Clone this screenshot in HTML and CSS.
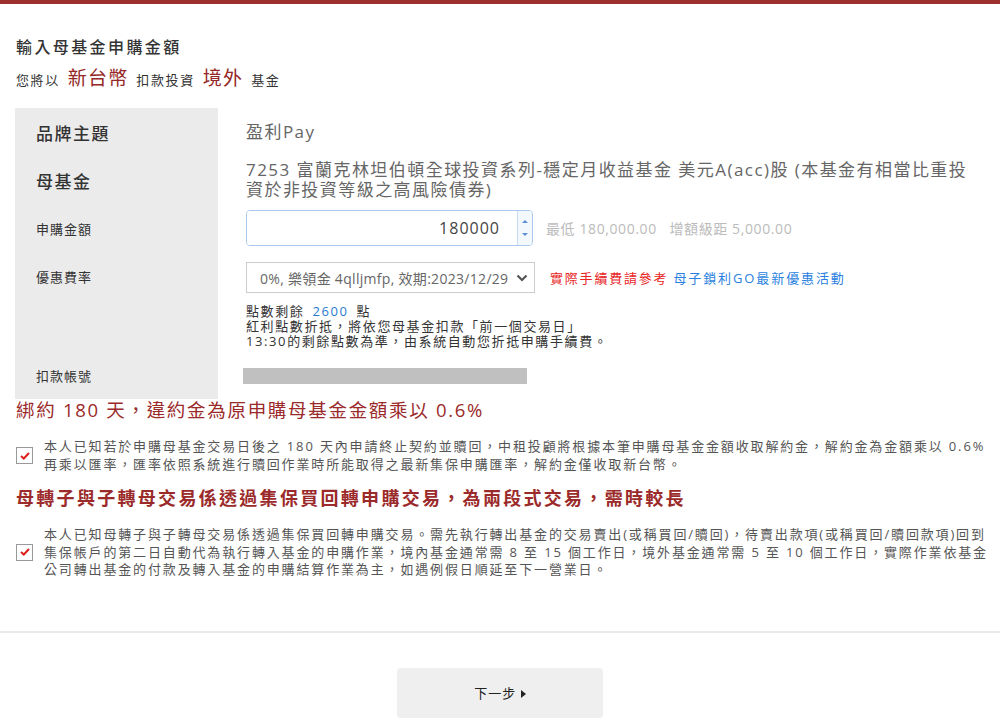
FILE: index.html
```html
<!DOCTYPE html>
<html>

<head>
    <meta charset="utf-8">
    <title>輸入母基金申購金額</title>
    <link rel="stylesheet" href="styles.css">
</head>

<body>
    <div class="main">
        <h1 class="title">輸入母基金申購金額</h1>
        <p class="subtitle">您將以 <span class="em">新台幣</span> 扣款投資 <span class="em">境外</span> 基金</p>

        <div class="form-table">
            <div class="row row-brand">
                <div class="label label-big">品牌主題</div>
                <div class="value value-big">盈利Pay</div>
            </div>
            <div class="row row-fund">
                <div class="label label-big">母基金</div>
                <div class="value value-big">7253 富蘭克林坦伯頓全球投資系列-穩定月收益基金 美元A(acc)股 (本基金有相當比重投資於非投資等級之高風險債券)</div>
            </div>
            <div class="row row-amount">
                <div class="label">申購金額</div>
                <div class="value value-inline">
                    <div class="amount-box">
                        <input class="amount-input" type="text" value="180000">
                        <div class="spinner">
                            <span class="spin-up"></span>
                            <span class="spin-down"></span>
                        </div>
                    </div>
                    <span class="hint">最低 180,000.00&nbsp;&nbsp; 增額級距 5,000.00</span>
                </div>
            </div>
            <div class="row row-fee">
                <div class="label label-top">優惠費率</div>
                <div class="value">
                    <div class="value-inline">
                        <div class="select-box">
                            <span>0%, 樂領金 4qlljmfp, 效期:2023/12/29</span>
                            <svg width="12" height="8" viewBox="0 0 12 8"><path d="M1.5 1.5 L6 6 L10.5 1.5" fill="none" stroke="#555" stroke-width="2.2"/></svg>
                        </div>
                        <span class="note-red">實際手續費請參考</span>
                        <a class="note-link" href="#">母子鎖利GO最新優惠活動</a>
                    </div>
                    <div class="points">
                        點數剩餘 <span class="points-num">2600</span> 點<br>
                        紅利點數折抵，將依您母基金扣款「前一個交易日」<br>
                        13:30的剩餘點數為準，由系統自動您折抵申購手續費。
                    </div>
                </div>
            </div>
            <div class="row row-account">
                <div class="label">扣款帳號</div>
                <div class="value">
                    <div class="account-bar"></div>
                </div>
            </div>
        </div>

        <h2 class="warn">綁約 180 天，違約金為原申購母基金金額乘以 0.6%</h2>
        <label class="agree">
            <span class="check"><svg width="10" height="8" viewBox="0 0 10 8"><path d="M1 4 L3.8 6.5 L9 1" fill="none" stroke="#e0201c" stroke-width="2"/></svg></span>
            <span class="agree-text">本人已知若於申購母基金交易日後之 180 天內申請終止契約並贖回，中租投顧將根據本筆申購母基金金額收取解約金，解約金為金額乘以 0.6% 再乘以匯率，匯率依照系統進行贖回作業時所能取得之最新集保申購匯率，解約金僅收取新台幣。</span>
        </label>

        <h2 class="warn warn-bold">母轉子與子轉母交易係透過集保買回轉申購交易，為兩段式交易，需時較長</h2>
        <label class="agree">
            <span class="check"><svg width="10" height="8" viewBox="0 0 10 8"><path d="M1 4 L3.8 6.5 L9 1" fill="none" stroke="#e0201c" stroke-width="2"/></svg></span>
            <span class="agree-text">本人已知母轉子與子轉母交易係透過集保買回轉申購交易。需先執行轉出基金的交易賣出(或稱買回/贖回)，待賣出款項(或稱買回/贖回款項)回到集保帳戶的第二日自動代為執行轉入基金的申購作業，境內基金通常需 8 至 15 個工作日，境外基金通常需 5 至 10 個工作日，實際作業依基金公司轉出基金的付款及轉入基金的申購結算作業為主，如遇例假日順延至下一營業日。</span>
        </label>
    </div>

    <hr class="divider">

    <div class="actions">
        <button class="next-btn">下一步 <svg width="5" height="8" viewBox="0 0 5 8"><path d="M0 0 L5 4 L0 8 Z" fill="#222"/></svg></button>
    </div>
</body>

</html>
```

FILE: styles.css
```css
body {
    margin: 0;
    font-family: "Open Sans", "Noto Sans CJK TC", sans-serif;
    color: #333;
    background-color: #fff;
    border-top: 4px solid #9d2f2c;
}

.main {
    padding: 0 15px;
}

.title {
    margin: 32px 0 0 1px;
    font-size: 16px;
    line-height: 22px;
    font-weight: 500;
    letter-spacing: 2.4px;
}

.subtitle {
    margin: 7px 0 0 1px;
    font-size: 13px;
    line-height: 26px;
    letter-spacing: 1.6px;
}

.subtitle .em {
    font-size: 19px;
    letter-spacing: 1.2px;
    color: #952726;
    margin: 0 3px;
}

.form-table {
    margin-top: 15px;
}

.row {
    display: flex;
}

.label {
    flex: 0 0 182px;
    padding-left: 21px;
    background-color: #ebebeb;
    font-size: 13px;
    letter-spacing: 1px;
    display: flex;
    align-items: center;
}

.label-big {
    font-size: 17px;
    font-weight: 500;
    letter-spacing: 1.5px;
}

.label-top {
    align-items: flex-start;
    padding-top: 10px;
    line-height: 31px;
}

.value {
    flex: 1;
    padding-left: 28px;
}

.value-big {
    font-size: 17px;
    line-height: 20px;
    color: #666;
    letter-spacing: 1.45px;
    padding-right: 11px;
}

.row-brand,
.row-fund,
.row-amount {
    height: 48px;
}

.row-brand .value,
.row-fund .value,
.row-amount .value {
    display: flex;
    align-items: center;
}

.value-inline {
    display: flex;
    align-items: center;
}

.amount-box {
    display: flex;
    width: 285px;
    height: 34px;
    border: 1px solid #a9c8ec;
    border-radius: 4px;
    overflow: hidden;
}

.amount-input {
    flex: 1;
    min-width: 0;
    border: none;
    outline: none;
    text-align: right;
    padding-right: 17px;
    font-family: inherit;
    font-size: 16px;
    letter-spacing: 1px;
    color: #444;
}

.spinner {
    width: 14px;
    border-left: 1px solid #c7dbf2;
    background-color: #f3f8fd;
    display: flex;
    flex-direction: column;
    align-items: center;
    justify-content: space-around;
    padding: 4px 0;
}

.spin-up {
    border-left: 3px solid transparent;
    border-right: 3px solid transparent;
    border-bottom: 3px solid #5b8fcf;
}

.spin-down {
    border-left: 3px solid transparent;
    border-right: 3px solid transparent;
    border-top: 3px solid #5b8fcf;
}

.hint {
    margin-left: 13px;
    font-size: 14px;
    letter-spacing: 0.6px;
    color: #bbb;
}

.row-fee .value {
    padding-top: 10px;
    padding-bottom: 6px;
}

.select-box {
    display: flex;
    align-items: center;
    justify-content: space-between;
    box-sizing: border-box;
    width: 289px;
    height: 31px;
    padding: 0 6px 0 13px;
    border: 1px solid #ccc;
    font-size: 14px;
    letter-spacing: 0.3px;
    color: #666;
}

.note-red {
    margin-left: 15px;
    font-size: 13px;
    letter-spacing: 1.8px;
    color: #e8261f;
}

.note-link {
    margin-left: 5px;
    font-size: 13px;
    letter-spacing: 1.9px;
    color: #2a7fe0;
    text-decoration: none;
}

.points {
    margin-top: 11px;
    font-size: 13px;
    line-height: 15px;
    letter-spacing: 1.6px;
    color: #333;
}

.points-num {
    color: #2a7ad0;
    margin: 0 3px;
}

.row-account {
    height: 44px;
}

.row-account .label,
.row-account .value {
    padding-bottom: 3px;
}

.row-account .value {
    display: flex;
    align-items: center;
}

.account-bar {
    width: 284px;
    height: 16px;
    margin-left: -3px;
    background-color: #c0c0c0;
}

.warn {
    margin: 0 0 0 1px;
    font-size: 18.5px;
    line-height: 22px;
    font-weight: 400;
    letter-spacing: 1.7px;
    color: #9b2a2a;
}

.warn-bold {
    margin-top: 14px;
    font-size: 18px;
    font-weight: 700;
    letter-spacing: 2.3px;
}

.agree {
    display: flex;
    align-items: center;
    margin-top: 17px;
    margin-right: -8px;
}

.check {
    flex: 0 0 auto;
    display: flex;
    align-items: center;
    justify-content: center;
    width: 15px;
    height: 15px;
    margin: 0 11px 0 1px;
    border: 1px solid #999;
    background-color: #fff;
}

.agree-text {
    font-size: 13px;
    line-height: 17.5px;
    letter-spacing: 1.85px;
    color: #555;
}

.divider {
    margin: 52px 0 0;
    border: none;
    border-top: 2px solid #e9e9e9;
}

.actions {
    display: flex;
    justify-content: center;
    padding-top: 35px;
}

.next-btn {
    width: 206px;
    height: 50px;
    border: none;
    border-radius: 4px;
    background-color: #efefef;
    font-family: inherit;
    font-size: 13px;
    letter-spacing: 1px;
    color: #222;
    cursor: pointer;
}
```
